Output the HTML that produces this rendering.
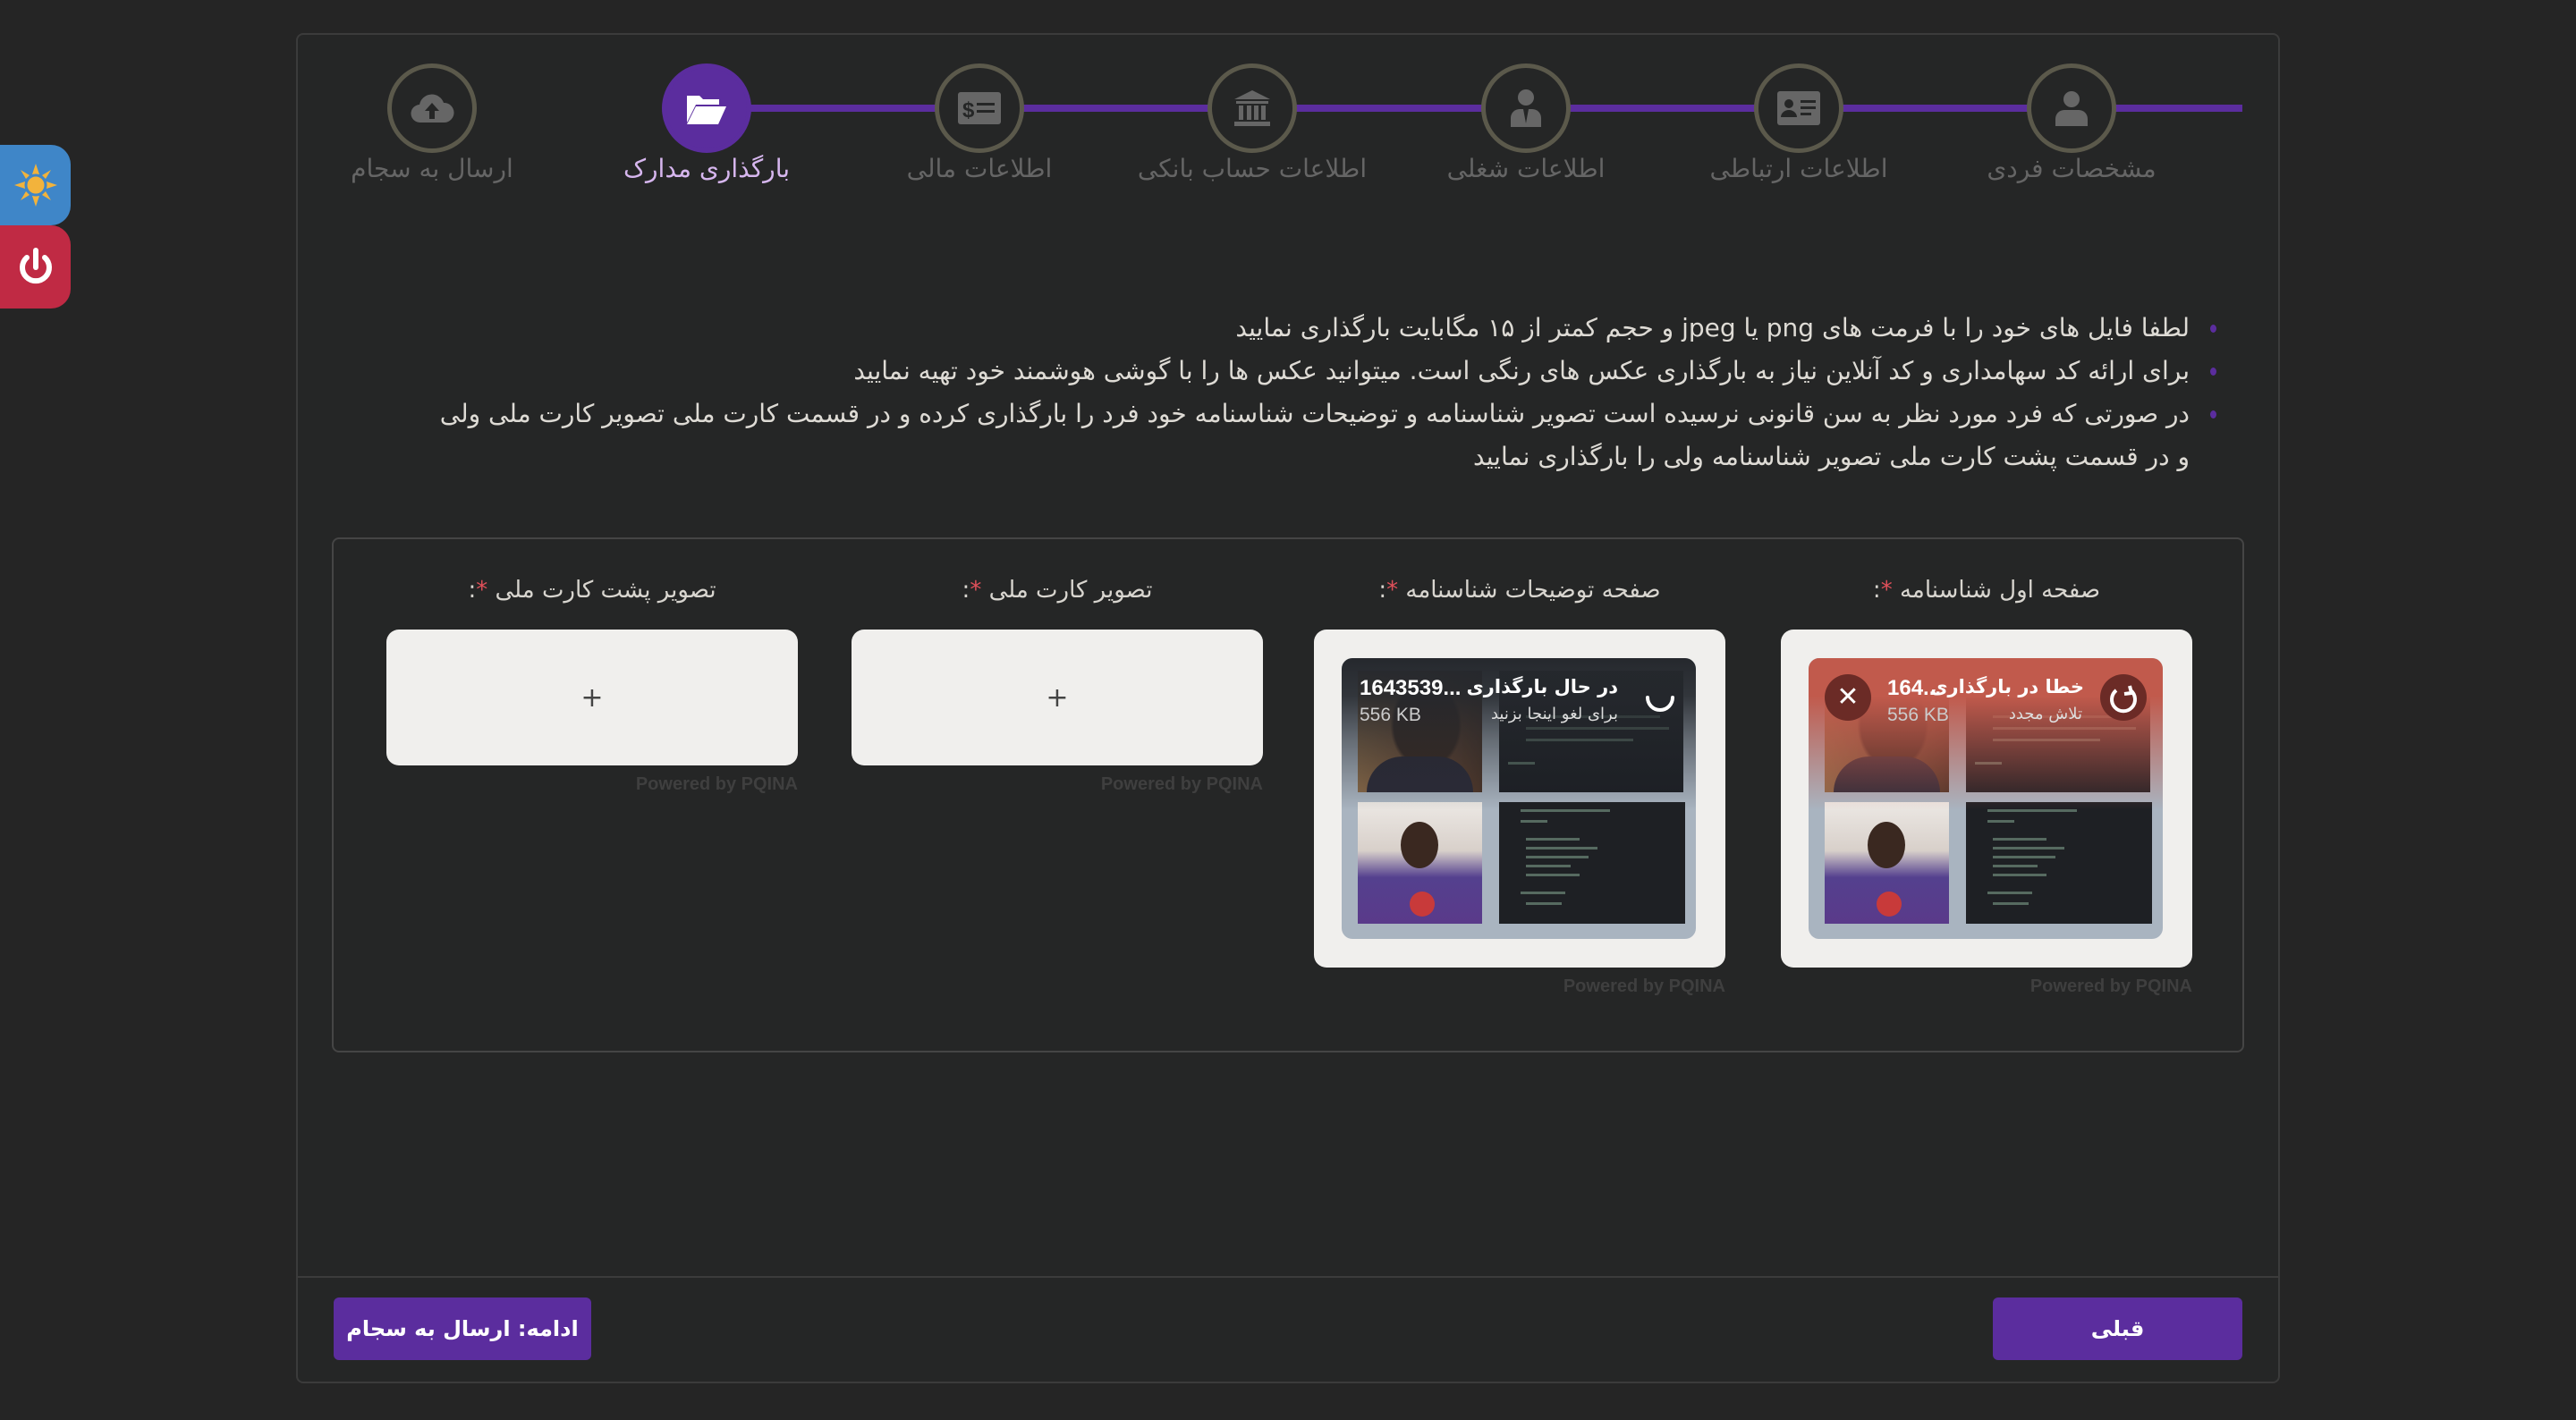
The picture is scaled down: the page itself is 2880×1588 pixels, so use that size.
<!DOCTYPE html>
<html><head><meta charset="utf-8"><style>
*{box-sizing:border-box;margin:0;padding:0}
body{width:2880px;height:1588px;background:#252525;font-family:"DejaVu Sans","Liberation Sans",sans-serif;position:relative;overflow:hidden}
.card{position:absolute;left:331px;top:37px;width:2218px;height:1510px;border:2px solid #3b3b3b;border-radius:8px;background:#252626}
.line{position:absolute;left:790px;top:117px;width:1717px;height:8px;background:#5b2d9e}
.step{position:absolute;top:71px;width:100px;height:100px;margin-left:-50px;border-radius:50%;border:5px solid #5b594b;background:#252626;display:flex;align-items:center;justify-content:center}
.step.act{background:#5b2d9e;border-color:#5b2d9e}
.lbl{position:absolute;top:172px;width:320px;margin-left:-160px;text-align:center;color:#656565;font-size:28px;direction:rtl}
.lbl.act{color:#d6b6ee}
.side{position:absolute;left:0;width:79px;border-radius:0 22px 22px 0;display:flex;align-items:center;justify-content:center}
ul{position:absolute;right:432px;top:343px;direction:rtl;list-style:none;color:#dedbd5;font-size:28px;line-height:48px;width:2010px}
ul li{position:relative}
ul li:before{content:"";position:absolute;right:-30px;top:20px;width:7px;height:9px;border-radius:50%;background:#5b2d9e}
.inner{position:absolute;left:371px;top:601px;width:2138px;height:576px;border:2px solid #454545;border-radius:8px}
.flab{position:absolute;top:645px;width:460px;text-align:center;color:#d8d5cf;font-size:26px;direction:rtl}
.flab b{color:#e0505a;font-weight:normal}
.box{position:absolute;top:704px;width:460px;background:#f0efed;border-radius:14px;display:flex;align-items:center;justify-content:center;color:#444;font-size:30px}
.pw{position:absolute;color:#3f3f3f;font-size:20px;font-family:"Liberation Sans",sans-serif;font-weight:bold;text-align:right;width:460px}
.img{position:absolute;left:31px;top:32px;width:396px;height:314px;border-radius:12px;background:#a9b4c0;overflow:hidden}
.c{position:absolute}
.ph1{left:18px;top:14px;width:139px;height:136px;background:radial-gradient(ellipse 40px 50px at 55% 45%,#3a2a22 0,#3a2a22 90%,transparent 100%),linear-gradient(90deg,#8a6a48,#6b4a35 60%,#4a3428);}
.ph1:after{content:"";position:absolute;left:10px;right:10px;bottom:0;height:40px;border-radius:40px 40px 0 0;background:#2b2a38}
.ph2{left:18px;top:161px;width:139px;height:136px;background:linear-gradient(#ece8e4,#d8d0ca 40%,#54408e 62%,#5a3a8a)}
.ph2:before{content:"";position:absolute;left:48px;top:22px;width:42px;height:52px;border-radius:50%;background:#3a2820}
.ph2:after{content:"";position:absolute;left:58px;top:100px;width:28px;height:28px;border-radius:50%;background:#c83a3a}
.cd1{left:176px;top:14px;width:206px;height:136px;background:#1c1f24}
.cd2{left:176px;top:161px;width:208px;height:136px;background:#1e2024}
.cd2 i,.cd1 i{position:absolute;height:3px;background:#6d8a7a;opacity:.7}
.ov{position:absolute;left:0;top:0;right:0;height:170px}
.t1{position:absolute;color:#fff;font-size:21px;font-weight:bold;white-space:nowrap}
.t2{position:absolute;color:#ddd;font-size:18px;white-space:nowrap}
.rtl{direction:rtl}
.btn{position:absolute;top:1451px;height:70px;background:#5b2d9e;border-radius:6px;color:#fff;font-weight:bold;font-size:24px;display:flex;align-items:center;justify-content:center;direction:rtl}
</style></head><body>
<div class="side" style="top:162px;height:90px;background:#3f86c8">
<svg width="50" height="50" viewBox="0 0 50 50"><g fill="#f2b33c"><polygon points="25,1 29,13 21,13"/><polygon points="25,49 29,37 21,37"/><polygon points="1,25 13,21 13,29"/><polygon points="49,25 37,21 37,29"/><polygon points="8,8 18,14 14,18"/><polygon points="42,8 36,18 32,14"/><polygon points="8,42 14,32 18,36"/><polygon points="42,42 32,36 36,32"/></g><circle cx="25" cy="25" r="11" fill="#f2b33c" stroke="#3f86c8" stroke-width="3"/></svg></div>
<div class="side" style="top:252px;height:93px;background:#c02a44">
<svg width="50" height="50" viewBox="0 0 50 50"><path d="M15 14 A15 15 0 1 0 35 14" fill="none" stroke="#fff" stroke-width="6" stroke-linecap="round"/><line x1="25" y1="6" x2="25" y2="25" stroke="#fff" stroke-width="6" stroke-linecap="round"/></svg></div>

<div class="card"></div>
<div class="line"></div>
<div class="step" style="left:483px"><svg width="50" height="44" viewBox="0 0 50 44"><path d="M12 38a10 10 0 0 1-1-20 14 14 0 0 1 27-2 11 11 0 0 1 1 22z" fill="#666"/><path d="M25 16l-8 9h5v9h6v-9h5z" fill="#252626"/></svg></div>
<div class="step act" style="left:790px"><svg width="48" height="40" viewBox="0 0 48 40"><path d="M2 6h14l4 4h18v6H12L2 36z" fill="#fff"/><path d="M12 18h34l-9 20H2z" fill="#fff"/></svg></div>
<div class="step" style="left:1095px"><svg width="50" height="40" viewBox="0 0 50 40"><rect x="1" y="2" width="48" height="36" rx="3" fill="#666"/><text x="6" y="30" font-size="24" font-weight="bold" fill="#252626" font-family="Liberation Sans">$</text><rect x="22" y="14" width="20" height="3" fill="#252626"/><rect x="22" y="22" width="20" height="3" fill="#252626"/></svg></div>
<div class="step" style="left:1400px"><svg width="44" height="44" viewBox="0 0 44 44"><polygon points="22,2 42,12 2,12" fill="#666"/><rect x="4" y="14" width="36" height="3" fill="#666"/><rect x="7" y="19" width="5" height="16" fill="#666"/><rect x="16" y="19" width="5" height="16" fill="#666"/><rect x="24" y="19" width="5" height="16" fill="#666"/><rect x="32" y="19" width="5" height="16" fill="#666"/><rect x="2" y="37" width="40" height="5" fill="#666"/></svg></div>
<div class="step" style="left:1706px"><svg width="40" height="46" viewBox="0 0 40 46"><circle cx="20" cy="11" r="9" fill="#666"/><path d="M3 44v-10a10 10 0 0 1 10-10h14a10 10 0 0 1 10 10v10z" fill="#666"/><path d="M17 24l3 16 3-16z" fill="#252626"/></svg></div>
<div class="step" style="left:2011px"><svg width="50" height="40" viewBox="0 0 50 40"><rect x="1" y="1" width="48" height="38" rx="3" fill="#666"/><circle cx="14" cy="15" r="5" fill="#252626"/><path d="M5 30a9 8 0 0 1 18 0z" fill="#252626"/><rect x="27" y="11" width="17" height="3" fill="#252626"/><rect x="27" y="18" width="17" height="3" fill="#252626"/><rect x="27" y="25" width="12" height="3" fill="#252626"/></svg></div>
<div class="step" style="left:2316px"><svg width="36" height="40" viewBox="0 0 36 40"><circle cx="18" cy="10" r="9" fill="#666"/><path d="M0 40v-8a10 10 0 0 1 10-10h16a10 10 0 0 1 10 10v8z" fill="#666"/></svg></div>

<div class="lbl" style="left:483px">ارسال به سجام</div>
<div class="lbl act" style="left:790px">بارگذاری مدارک</div>
<div class="lbl" style="left:1095px">اطلاعات مالی</div>
<div class="lbl" style="left:1400px">اطلاعات حساب بانکی</div>
<div class="lbl" style="left:1706px">اطلاعات شغلی</div>
<div class="lbl" style="left:2011px">اطلاعات ارتباطی</div>
<div class="lbl" style="left:2316px">مشخصات فردی</div>

<ul>
<li>لطفا فایل های خود را با فرمت های png یا jpeg و حجم کمتر از ۱۵ مگابایت بارگذاری نمایید</li>
<li>برای ارائه کد سهامداری و کد آنلاین نیاز به بارگذاری عکس های رنگی است. میتوانید عکس ها را با گوشی هوشمند خود تهیه نمایید</li>
<li>در صورتی که فرد مورد نظر به سن قانونی نرسیده است تصویر شناسنامه و توضیحات شناسنامه خود فرد را بارگذاری کرده و در قسمت کارت ملی تصویر کارت ملی ولی<br>و در قسمت پشت کارت ملی تصویر شناسنامه ولی را بارگذاری نمایید</li>
</ul>

<div class="inner"></div>
<div class="flab" style="left:1991px">صفحه اول شناسنامه <b>*</b>:</div>
<div class="flab" style="left:1469px">صفحه توضیحات شناسنامه <b>*</b>:</div>
<div class="flab" style="left:952px">تصویر کارت ملی <b>*</b>:</div>
<div class="flab" style="left:432px">تصویر پشت کارت ملی <b>*</b>:</div>

<div class="box" style="left:1991px;height:378px;display:block">
<div class="img">
<div class="c ph1"></div><div class="c ph2"></div>
<div class="c cd1"><i style="left:30px;top:50px;width:150px"></i><i style="left:30px;top:63px;width:160px"></i><i style="left:30px;top:76px;width:120px"></i><i style="left:10px;top:102px;width:30px"></i></div>
<div class="c cd2"><i style="left:24px;top:8px;width:100px"></i><i style="left:24px;top:20px;width:30px"></i><i style="left:30px;top:40px;width:60px"></i><i style="left:30px;top:50px;width:80px"></i><i style="left:30px;top:60px;width:70px"></i><i style="left:30px;top:70px;width:50px"></i><i style="left:30px;top:80px;width:60px"></i><i style="left:24px;top:100px;width:50px"></i><i style="left:30px;top:112px;width:40px"></i></div>
<div class="ov" style="background:linear-gradient(#c15a4c 0,#c15a4c 25%,rgba(193,90,76,.6) 55%,rgba(193,90,76,0))"></div>
<div class="c" style="left:18px;top:18px;width:52px;height:52px;border-radius:50%;background:#6b2b26;color:#fff;font-size:30px;text-align:center;line-height:52px;font-family:Liberation Sans">✕</div>
<div class="c" style="left:326px;top:18px;width:52px;height:52px;border-radius:50%;background:#6b2b26"><svg width="52" height="52" viewBox="0 0 52 52"><path d="M18 18a13 13 0 1 0 16 0" fill="none" stroke="#fff" stroke-width="4"/><path d="M33 13l2 8-8 1" fill="none" stroke="#fff" stroke-width="4"/></svg></div>
<div class="t1 rtl" style="right:88px;top:20px">خطا در بارگذاری</div>
<div class="t1" style="left:88px;top:20px;font-family:Liberation Sans;font-size:24px">164...</div>
<div class="t2 rtl" style="right:90px;top:52px">تلاش مجدد</div>
<div class="t2" style="left:88px;top:52px;font-family:Liberation Sans;color:#ccc;font-size:21px">556 KB</div>
</div></div>

<div class="box" style="left:1469px;height:378px;display:block">
<div class="img">
<div class="c ph1"></div><div class="c ph2"></div>
<div class="c cd1"><i style="left:30px;top:50px;width:150px"></i><i style="left:30px;top:63px;width:160px"></i><i style="left:30px;top:76px;width:120px"></i><i style="left:10px;top:102px;width:30px"></i></div>
<div class="c cd2"><i style="left:24px;top:8px;width:100px"></i><i style="left:24px;top:20px;width:30px"></i><i style="left:30px;top:40px;width:60px"></i><i style="left:30px;top:50px;width:80px"></i><i style="left:30px;top:60px;width:70px"></i><i style="left:30px;top:70px;width:50px"></i><i style="left:30px;top:80px;width:60px"></i><i style="left:24px;top:100px;width:50px"></i><i style="left:30px;top:112px;width:40px"></i></div>
<div class="ov" style="background:linear-gradient(#25282d 0,rgba(37,40,45,.9) 25%,rgba(37,40,45,.5) 55%,rgba(37,40,45,0))"></div>
<div class="c" style="left:336px;top:24px"><svg width="40" height="40" viewBox="0 0 40 40"><path d="M6 20a14 14 0 0 0 28 0" fill="none" stroke="#fff" stroke-width="4" stroke-linecap="round"/></svg></div>
<div class="t1 rtl" style="right:87px;top:20px">در حال بارگذاری</div>
<div class="t1" style="left:20px;top:20px;font-family:Liberation Sans;font-size:24px">1643539...</div>
<div class="t2 rtl" style="right:87px;top:52px">برای لغو اینجا بزنید</div>
<div class="t2" style="left:20px;top:52px;font-family:Liberation Sans;color:#ccc;font-size:21px">556 KB</div>
</div></div>

<div class="box" style="left:952px;height:152px">+</div>
<div class="box" style="left:432px;height:152px">+</div>

<div class="pw" style="left:432px;top:866px">Powered by PQINA</div>
<div class="pw" style="left:952px;top:866px">Powered by PQINA</div>
<div class="pw" style="left:1469px;top:1092px">Powered by PQINA</div>
<div class="pw" style="left:1991px;top:1092px">Powered by PQINA</div>

<div style="position:absolute;left:333px;top:1427px;width:2214px;height:2px;background:#3b3b3b"></div>
<div class="btn" style="left:373px;width:288px">ادامه: ارسال به سجام</div>
<div class="btn" style="left:2228px;width:279px">قبلی</div>
</body></html>
